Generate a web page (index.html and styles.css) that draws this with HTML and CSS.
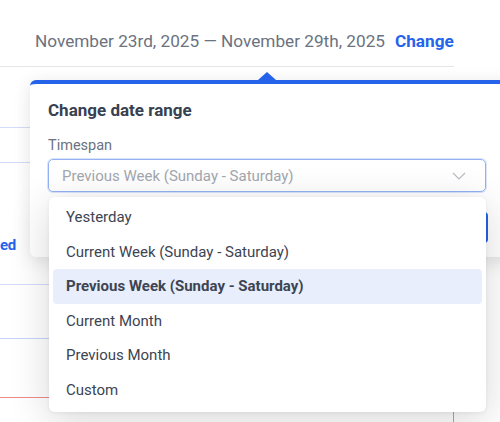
FILE: index.html
```html
<!DOCTYPE html>
<html lang="en">
<head>
  <meta charset="UTF-8">
  <meta name="viewport" content="width=device-width, initial-scale=1.0">
  <title>Date range</title>
  <link rel="stylesheet" href="styles.css">
</head>
<body>
  <div class="page">
    <div class="range-bar">
      <span class="range-text">November 23rd, 2025 — November 29th, 2025</span>
      <a class="range-change" href="#">Change</a>
    </div>

    <div class="bg-rows">
      <div class="bg-row row-a"></div>
      <div class="bg-row row-b"></div>
      <div class="bg-row row-c"><span class="cut-word">ed</span></div>
      <div class="bg-row row-d"></div>
      <div class="bg-row row-e"></div>
    </div>
    <div class="red-tick"></div>

    <div class="popover">
      <div class="popover-arrow"></div>
      <h3 class="popover-title">Change date range</h3>
      <label class="field-label">Timespan</label>
      <div class="select-box">
        <span class="select-placeholder">Previous Week (Sunday - Saturday)</span>
        <svg class="chevron" width="14" height="8" viewBox="0 0 14 8">
          <path d="M1 1 L7 7 L13 1" fill="none" stroke="#b8bcc3" stroke-width="1.2"/>
        </svg>
      </div>
      <div class="popover-actions">
        <button class="apply-btn">Apply</button>
      </div>
    </div>

    <ul class="dropdown">
      <li class="option">Yesterday</li>
      <li class="option">Current Week (Sunday - Saturday)</li>
      <li class="option selected">Previous Week (Sunday - Saturday)</li>
      <li class="option">Current Month</li>
      <li class="option">Previous Month</li>
      <li class="option">Custom</li>
    </ul>
  </div>
</body>
</html>
```

FILE: styles.css
```css
body {
  margin: 0;
  font-family: Roboto, "Liberation Sans", sans-serif;
  background: #ffffff;
}

.page {
  position: relative;
  width: 500px;
  height: 422px;
  overflow: hidden;
}

.range-bar {
  width: 454px;
  height: 67px;
  box-sizing: border-box;
  padding: 30px 0 0 35px;
  border-bottom: 1px solid #e3e5e8;
  display: flex;
  align-items: flex-start;
  gap: 10px;
  line-height: 22px;
  font-size: 17.2px;
}

.range-text {
  color: #6b7280;
}

.range-change {
  color: #2563eb;
  font-weight: 700;
  text-decoration: none;
}

.bg-rows {
  width: 454px;
}

.bg-row {
  box-sizing: border-box;
}

.row-a {
  height: 61px;
  border-bottom: 1px solid #d4dcfb;
}

.row-b {
  height: 35px;
  border-bottom: 1px solid #d4dcfb;
}

.row-c {
  height: 122px;
  border-bottom: 1px solid #d4dcfb;
  padding-top: 72px;
}

.cut-word {
  display: block;
  color: #2563eb;
  font-weight: 700;
  font-size: 15px;
  line-height: 20px;
  letter-spacing: -0.3px;
}

.row-d {
  height: 54px;
  border-bottom: 1px solid #c9d2fa;
}

.row-e {
  height: 59px;
  border-bottom: 1px solid #f08a8a;
}

.red-tick {
  position: absolute;
  left: 453px;
  top: 405px;
  width: 1px;
  height: 20px;
  background: #f08a8a;
}

.popover {
  position: absolute;
  left: 30px;
  top: 80px;
  width: 490px;
  box-sizing: border-box;
  padding: 15px 0 14px 18px;
  background: #ffffff;
  border-top: 4px solid #2563eb;
  border-radius: 6px;
  box-shadow: 0 4px 18px rgba(0, 0, 0, 0.12);
}

.popover-arrow {
  position: absolute;
  left: 228px;
  top: -12px;
  width: 0;
  height: 0;
  border-left: 9px solid transparent;
  border-right: 9px solid transparent;
  border-bottom: 8px solid #2563eb;
}

.popover-title {
  margin: 0;
  font-size: 17px;
  line-height: 22px;
  font-weight: 700;
  color: #374151;
}

.field-label {
  display: block;
  margin-top: 15px;
  font-size: 14.5px;
  line-height: 20px;
  color: #6b7280;
}

.select-box {
  margin-top: 3px;
  width: 438px;
  height: 33px;
  box-sizing: border-box;
  border: 1px solid #93b1f3;
  border-radius: 5px;
  box-shadow: 0 0 0 1px rgba(147, 177, 243, 0.35);
  display: flex;
  align-items: center;
  justify-content: space-between;
  padding: 0 19px 0 13px;
}

.select-placeholder {
  font-size: 15px;
  color: #a3a7ae;
}

.popover-actions {
  margin-top: 20px;
  width: 440px;
  display: flex;
  justify-content: flex-end;
}

.apply-btn {
  height: 31px;
  padding: 0 20px;
  border: none;
  border-radius: 4px;
  background: #2563eb;
  color: #ffffff;
  font-family: inherit;
  font-size: 15px;
  font-weight: 700;
}

.dropdown {
  position: absolute;
  left: 49px;
  top: 197px;
  width: 437px;
  height: 215px;
  box-sizing: border-box;
  margin: 0;
  padding: 3px 0 5px;
  list-style: none;
  background: #ffffff;
  border-radius: 6px;
  box-shadow: 0 8px 40px rgba(0, 0, 0, 0.16), 0 1px 4px rgba(0, 0, 0, 0.06);
}

.option {
  height: 34.5px;
  margin: 0 4px;
  padding: 0 13px;
  display: flex;
  align-items: center;
  font-size: 15px;
  color: #3d4452;
  border-radius: 4px;
}

.option.selected {
  background: #e8eefb;
  font-weight: 700;
}
```
